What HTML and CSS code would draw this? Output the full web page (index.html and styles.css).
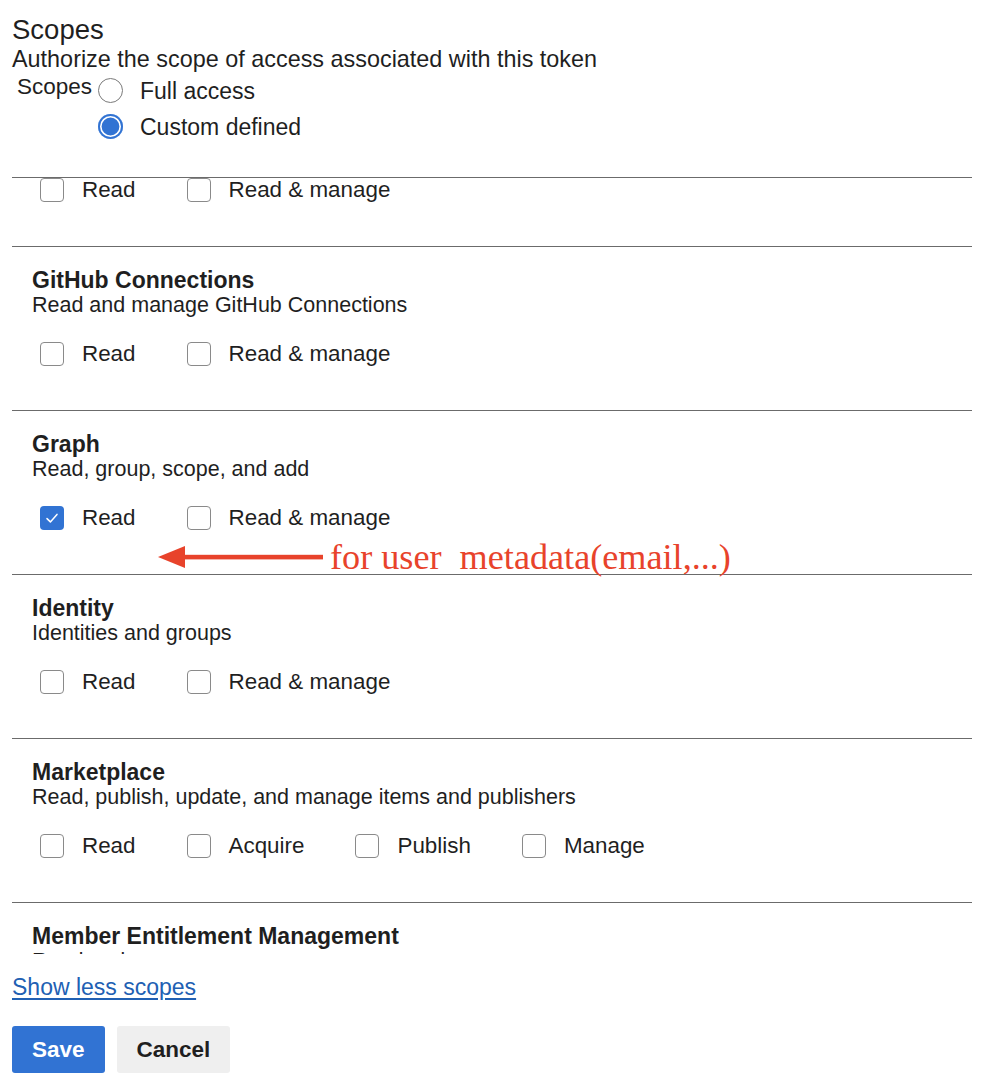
FILE: index.html
```html
<!DOCTYPE html>
<html lang="en">
<head>
<meta charset="utf-8">
<title>Scopes</title>
<link rel="stylesheet" href="styles.css">
</head>
<body>
<div class="page">
  <h2 class="heading">Scopes</h2>
  <p class="subtitle">Authorize the scope of access associated with this token</p>
  <div class="radio-field">
    <span class="radio-label">Scopes</span>
    <div class="radio-group">
      <label class="radio-option"><span class="radio"></span><span class="radio-text">Full access</span></label>
      <label class="radio-option"><span class="radio checked"></span><span class="radio-text">Custom defined</span></label>
    </div>
  </div>

  <div class="scope-list" id="scopeList">
    <section class="scope">
      <h3 class="scope-title">Extensions</h3>
      <p class="scope-desc">Read, install, uninstall, and manage extensions</p>
      <div class="options">
        <label class="option"><span class="box"></span><span>Read</span></label>
        <label class="option"><span class="box"></span><span>Read &amp; manage</span></label>
      </div>
    </section>
    <section class="scope">
      <h3 class="scope-title">GitHub Connections</h3>
      <p class="scope-desc">Read and manage GitHub Connections</p>
      <div class="options">
        <label class="option"><span class="box"></span><span>Read</span></label>
        <label class="option"><span class="box"></span><span>Read &amp; manage</span></label>
      </div>
    </section>
    <section class="scope annotated">
      <h3 class="scope-title">Graph</h3>
      <p class="scope-desc">Read, group, scope, and add</p>
      <div class="options">
        <label class="option"><span class="box checked"><svg viewBox="0 0 24 24" width="24" height="24"><path d="M7 12.6 L10.4 15.9 L17 8.4" fill="none" stroke="#fff" stroke-width="1.5" stroke-linecap="round" stroke-linejoin="round"/></svg></span><span>Read</span></label>
        <label class="option"><span class="box"></span><span>Read &amp; manage</span></label>
      </div>
      <div class="annotation">
        <svg class="arrow" viewBox="0 0 166 24" width="166" height="24"><polygon points="0,12 27,1 27,23" fill="#e8432b"/><rect x="25" y="9.8" width="140" height="4.6" fill="#e8432b"/></svg>
        <span class="note">for user  metadata(email,...)</span>
      </div>
    </section>
    <section class="scope">
      <h3 class="scope-title">Identity</h3>
      <p class="scope-desc">Identities and groups</p>
      <div class="options">
        <label class="option"><span class="box"></span><span>Read</span></label>
        <label class="option"><span class="box"></span><span>Read &amp; manage</span></label>
      </div>
    </section>
    <section class="scope">
      <h3 class="scope-title">Marketplace</h3>
      <p class="scope-desc">Read, publish, update, and manage items and publishers</p>
      <div class="options">
        <label class="option"><span class="box"></span><span>Read</span></label>
        <label class="option"><span class="box"></span><span>Acquire</span></label>
        <label class="option"><span class="box"></span><span>Publish</span></label>
        <label class="option"><span class="box"></span><span>Manage</span></label>
      </div>
    </section>
    <section class="scope">
      <h3 class="scope-title">Member Entitlement Management</h3>
      <p class="scope-desc">Read and manage users</p>
      <div class="options">
        <label class="option"><span class="box"></span><span>Read</span></label>
        <label class="option"><span class="box"></span><span>Read &amp; write</span></label>
      </div>
    </section>
  </div>

  <a class="toggle-link" href="#">Show less scopes</a>

  <div class="actions">
    <button class="btn primary" type="button">Save</button>
    <button class="btn secondary" type="button">Cancel</button>
  </div>
</div>
<script src="script.js"></script>
</body>
</html>
```

FILE: styles.css
```css
* { box-sizing: border-box; }
html, body { margin: 0; padding: 0; background: #ffffff; }
body {
  font-family: "Liberation Sans", Arial, Helvetica, sans-serif;
  color: #1f1f1f;
}
.page {
  padding: 0 20px 0 12px;
}
.heading {
  margin: 14px 0 0 0;
  font-size: 27.5px;
  line-height: 32px;
  font-weight: normal;
}
.subtitle {
  margin: 0;
  font-size: 23.4px;
  line-height: 26px;
}
.radio-field {
  display: flex;
  align-items: flex-start;
}
.radio-label {
  margin-left: 5px;
  font-size: 22.5px;
  line-height: 30px;
  width: 81px;
}
.radio-group {
  display: flex;
  flex-direction: column;
}
.radio-option {
  display: flex;
  align-items: center;
  height: 36.5px;
  font-size: 23px;
  gap: 17px;
}
.radio-text { position: relative; top: 1px; }
.radio {
  width: 25px;
  height: 25px;
  border-radius: 50%;
  border: 1px solid #7a7a7a;
  background: #fff;
}
.radio.checked {
  border: none;
  background: #3173d3;
  box-shadow: inset 0 0 0 2px #3173d3, inset 0 0 0 3.6px #ffffff;
}

.scope-list {
  margin-top: 32px;
  border-top: 1px solid #6b6b6b;
  height: 777px;
  overflow: hidden;
}
.scope {
  position: relative;
  border-bottom: 1px solid #6b6b6b;
  padding: 20px 20px 43px 20px;
}
.scope-title {
  margin: 0;
  font-size: 23px;
  line-height: 26px;
  font-weight: bold;
}
.scope-desc {
  margin: 0;
  font-size: 21.5px;
  line-height: 24px;
}
.options {
  display: flex;
  margin-top: 24px;
  padding-left: 8px;
  gap: 51px;
  height: 26px;
}
.option {
  display: flex;
  align-items: center;
  gap: 18px;
  font-size: 22.4px;
}
.box {
  width: 24px;
  height: 24px;
  border: 1px solid #8a8a8a;
  border-radius: 4px;
  background: #fff;
  display: block;
}
.box.checked {
  border: none;
  background: #3173d3;
}
.box svg { display: block; }

.annotation {
  position: absolute;
  left: 146px;
  top: 126px;
  height: 40px;
  display: flex;
  align-items: center;
}
.arrow { display: block; }
.note {
  margin-left: 6px;
  font-family: "Liberation Serif", "Times New Roman", serif;
  font-size: 36.2px;
  color: #e8432b;
  white-space: pre;
  line-height: 40px;
}

.toggle-link {
  display: inline-block;
  margin-top: 20px;
  font-size: 23px;
  line-height: 26px;
  color: #2160b3;
  text-decoration: underline;
  text-underline-offset: 3px;
}
.actions {
  display: flex;
  gap: 12px;
  margin-top: 26px;
}
.btn {
  height: 47px;
  padding: 0 20px;
  border: none;
  border-radius: 3px;
  font-family: "Liberation Sans", Arial, Helvetica, sans-serif;
  font-size: 22.5px;
  font-weight: bold;
  cursor: pointer;
}
.btn.primary { background: #3173d3; color: #ffffff; }
.btn.secondary { background: #efefef; color: #1f1f1f; }
```

FILE: script.js
```js
document.getElementById('scopeList').scrollTop = 95;
```
